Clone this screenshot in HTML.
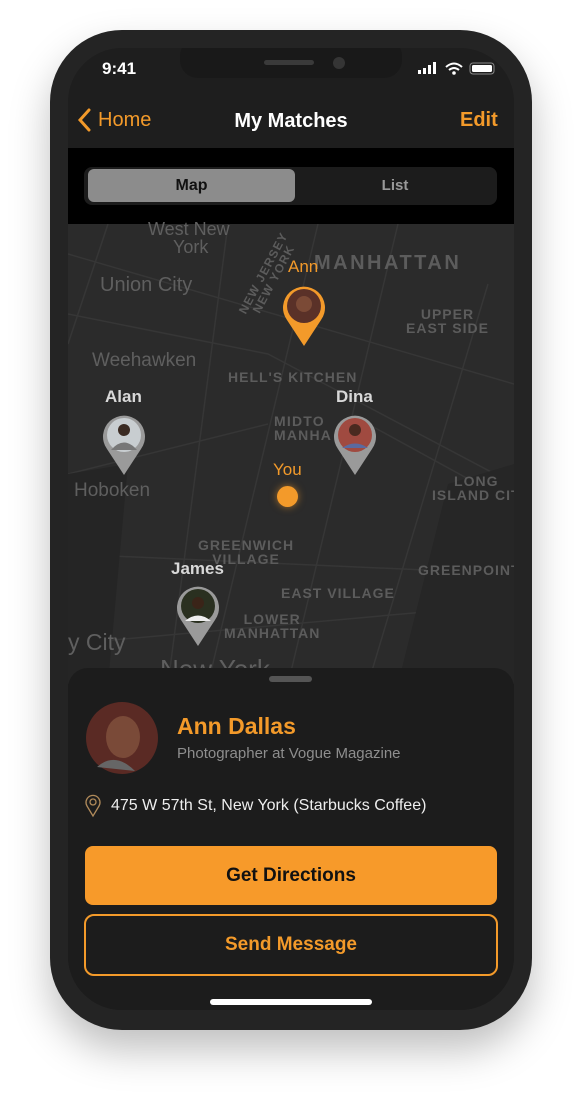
<!DOCTYPE html>
<html><head><style>
*{margin:0;padding:0;box-sizing:border-box}
body{width:582px;height:1100px;background:#fff;font-family:"Liberation Sans",sans-serif;position:relative;overflow:hidden}
.phone{position:absolute;left:50px;top:30px;width:482px;height:1000px;border-radius:72px;background:#242424;box-shadow:0 20px 40px rgba(0,0,0,.25)}
.screen{position:absolute;left:68px;top:48px;width:446px;height:962px;border-radius:54px;background:#1e1e1e;overflow:hidden}
.abs{position:absolute;white-space:nowrap}
.map{position:absolute;left:0;top:176px;width:446px;height:460px;background:#2b2b2b}
.ml{position:absolute;white-space:nowrap;color:#5c5c5c;font-weight:bold;letter-spacing:1.2px;font-size:14px;line-height:14px}
.mc{position:absolute;white-space:nowrap;color:#5f5f5f;font-size:20px}
.name{position:absolute;color:#d8d8d8;font-size:17px;font-weight:bold}
</style></head><body>
<div class="phone"></div>
<div class="screen">
 <div class="abs" style="left:112px;top:-10px;width:222px;height:40px;border-radius:18px;background:#191919"></div>
 <div class="abs" style="left:196px;top:12px;width:50px;height:5px;border-radius:3px;background:#3a3a3a"></div>
 <div class="abs" style="left:265px;top:9px;width:12px;height:12px;border-radius:50%;background:#353535"></div>
 <div class="abs" style="left:34px;top:11px;color:#fff;font-size:17px;font-weight:bold">9:41</div>
 <svg class="abs" style="left:350px;top:14px" width="82" height="14">
  <rect x="0" y="8" width="3" height="4" fill="#fff"/><rect x="5" y="6" width="3" height="6" fill="#fff"/><rect x="10" y="3" width="3" height="9" fill="#fff"/><rect x="15" y="0" width="3" height="12" fill="#fff"/>
  <path d="M28 5 Q36 -2 44 5" stroke="#fff" stroke-width="2" fill="none"/><path d="M31 8 Q36 4 41 8" stroke="#fff" stroke-width="2" fill="none"/><circle cx="36" cy="11" r="1.8" fill="#fff"/>
  <rect x="52" y="1" width="24" height="11" rx="3" fill="none" stroke="#888" stroke-width="1"/><rect x="54" y="3" width="20" height="7" rx="1.5" fill="#fff"/>
 </svg>
 <svg class="abs" style="left:8px;top:60px" width="16" height="24"><path d="M13 2 L4 12 L13 22" stroke="#f39a2a" stroke-width="3" fill="none" stroke-linecap="round"/></svg>
 <div class="abs" style="left:30px;top:61px;color:#f39a2a;font-size:20px">Home</div>
 <div class="abs" style="left:0;width:446px;text-align:center;top:62px;color:#fff;font-size:20px;font-weight:bold">My Matches</div>
 <div class="abs" style="left:392px;top:61px;color:#f39a2a;font-size:20px;font-weight:bold">Edit</div>
 <div class="abs" style="left:0;top:100px;width:446px;height:76px;background:#000"></div>
 <div class="abs" style="left:16px;top:119px;width:413px;height:38px;border-radius:8px;background:#1c1c1c"></div>
 <div class="abs" style="left:20px;top:121px;width:207px;height:33px;border-radius:6px;background:#8c8c8c;color:#111;font-size:16px;font-weight:bold;text-align:center;line-height:33px">Map</div>
 <div class="abs" style="left:227px;top:121px;width:200px;height:33px;color:#999;font-size:15px;font-weight:bold;text-align:center;line-height:33px">List</div>
 <div class="map">
  <svg class="abs" style="left:0;top:0" width="446" height="460">
   <g stroke="#363636" stroke-width="1.5" fill="none">
    <path d="M0 30 L446 160"/><path d="M0 90 L200 130 L446 260"/><path d="M40 0 L0 120"/><path d="M160 0 L100 460"/><path d="M250 0 L140 460"/><path d="M330 0 L220 460"/><path d="M420 60 L300 460"/><path d="M0 330 L446 350"/><path d="M0 420 L446 380"/><path d="M300 200 L446 280"/><path d="M0 250 L200 200"/>
   </g>
   <path d="M0 250 L60 240 L40 460 L0 460Z" fill="#252525"/>
   <path d="M380 260 L446 240 L446 460 L330 460Z" fill="#262626"/>
  </svg>
  <div class="mc" style="left:80px;top:-5px;font-size:18px">West New</div>
  <div class="mc" style="left:105px;top:13px;font-size:18px">York</div>
  <div class="mc" style="left:32px;top:50px">Union City</div>
  <div class="mc" style="left:24px;top:126px;font-size:19px">Weehawken</div>
  <div class="mc" style="left:6px;top:256px;font-size:19px">Hoboken</div>
  <div class="mc" style="left:0;top:405px;font-size:23px">y City</div>
  <div class="mc" style="left:92px;top:430px;font-size:26px">New York</div>
  <div class="ml" style="left:150px;top:42px;transform:rotate(-62deg);font-size:12px">NEW JERSEY</div>
  <div class="ml" style="left:168px;top:48px;transform:rotate(-62deg);font-size:12px">NEW YORK</div>
  <div class="ml" style="left:246px;top:32px;font-size:20px;letter-spacing:2.5px">MANHATTAN</div>
  <div class="ml" style="left:338px;top:83px;text-align:center;letter-spacing:1px">UPPER<br>EAST SIDE</div>
  <div class="ml" style="left:160px;top:146px;letter-spacing:1px">HELL'S KITCHEN</div>
  <div class="ml" style="left:206px;top:190px">MIDTO<br>MANHA</div>
  <div class="ml" style="left:364px;top:250px;text-align:center;letter-spacing:1px">LONG<br>ISLAND CIT</div>
  <div class="ml" style="left:130px;top:314px;text-align:center;letter-spacing:1px">GREENWICH<br>VILLAGE</div>
  <div class="ml" style="left:350px;top:339px;letter-spacing:1px">GREENPOINT</div>
  <div class="ml" style="left:213px;top:362px;letter-spacing:1px">EAST VILLAGE</div>
  <div class="ml" style="left:156px;top:388px;text-align:center;letter-spacing:1px">LOWER<br>MANHATTAN</div>
  <div class="abs" style="left:220px;top:33px;color:#f39a2a;font-size:17px">Ann</div>
  <svg class="abs" style="left:214px;top:60px" width="44" height="64"><path d="M22 62 L5 36 A21 21 0 1 1 39 36 Z" fill="#f39a2a"/><circle cx="22" cy="22" r="17" fill="#5a3128"/><circle cx="22" cy="20" r="8" fill="#7b4a36"/></svg>
  <div class="name" style="left:37px;top:163px">Alan</div>
  <svg class="abs" style="left:34px;top:189px" width="44" height="64"><path d="M22 62 L5 36 A21 21 0 1 1 39 36 Z" fill="#9a9a9a"/><circle cx="22" cy="22" r="17" fill="#c8cdd0"/><circle cx="22" cy="17" r="6" fill="#3a2a22"/><path d="M9 37 Q22 22 35 37Z" fill="#777"/></svg>
  <div class="name" style="left:268px;top:163px">Dina</div>
  <svg class="abs" style="left:265px;top:189px" width="44" height="64"><path d="M22 62 L5 36 A21 21 0 1 1 39 36 Z" fill="#9a9a9a"/><circle cx="22" cy="22" r="17" fill="#a04a40"/><circle cx="22" cy="17" r="6" fill="#4a2a20"/><path d="M9 35 Q22 26 35 35Z" fill="#5a6aa0"/></svg>
  <div class="abs" style="left:205px;top:236px;color:#f39a2a;font-size:17px">You</div>
  <div class="abs" style="left:209px;top:262px;width:21px;height:21px;border-radius:50%;background:#f39a2a;box-shadow:0 0 8px rgba(243,154,42,.6)"></div>
  <div class="name" style="left:103px;top:335px">James</div>
  <svg class="abs" style="left:108px;top:360px" width="44" height="64"><path d="M22 62 L5 36 A21 21 0 1 1 39 36 Z" fill="#9a9a9a"/><circle cx="22" cy="22" r="17" fill="#2a3020"/><circle cx="22" cy="19" r="6" fill="#3a2418"/><path d="M9 37 Q22 26 35 37Z" fill="#eee"/></svg>
 </div>
 <div class="abs" style="left:0;top:620px;width:446px;height:350px;border-radius:20px 20px 0 0;background:#1c1c1c"></div>
 <div class="abs" style="left:201px;top:628px;width:43px;height:6px;border-radius:3px;background:#555"></div>
 <svg class="abs" style="left:17px;top:653px" width="74" height="74"><circle cx="37" cy="37" r="36" fill="#5a2a24"/><ellipse cx="38" cy="36" rx="17" ry="21" fill="#7a4a38"/><path d="M12 66 Q30 50 50 70Z" fill="#666"/></svg>
 <div class="abs" style="left:109px;top:665px;color:#f39a2a;font-size:23px;font-weight:bold">Ann Dallas</div>
 <div class="abs" style="left:109px;top:697px;color:#8e8e8e;font-size:15px">Photographer at Vogue Magazine</div>
 <svg class="abs" style="left:16px;top:746px" width="18" height="24"><path d="M9 22 L3 12 A7 7 0 1 1 15 12 Z" fill="none" stroke="#b08a5a" stroke-width="1.3"/><circle cx="9" cy="8" r="3" fill="none" stroke="#b08a5a" stroke-width="1.3"/></svg>
 <div class="abs" style="left:43px;top:749px;color:#eee;font-size:16px">475 W 57th St, New York (Starbucks Coffee)</div>
 <div class="abs" style="left:17px;top:798px;width:412px;height:59px;border-radius:8px;background:#f79a2a;color:#111;font-size:19px;font-weight:bold;text-align:center;line-height:59px">Get Directions</div>
 <div class="abs" style="left:16px;top:866px;width:414px;height:62px;border-radius:10px;border:2px solid #f39a2a;color:#f39a2a;font-size:19px;font-weight:bold;text-align:center;line-height:58px">Send Message</div>
 <div class="abs" style="left:142px;top:951px;width:162px;height:6px;border-radius:3px;background:#fff"></div>
</div>
</body></html>
